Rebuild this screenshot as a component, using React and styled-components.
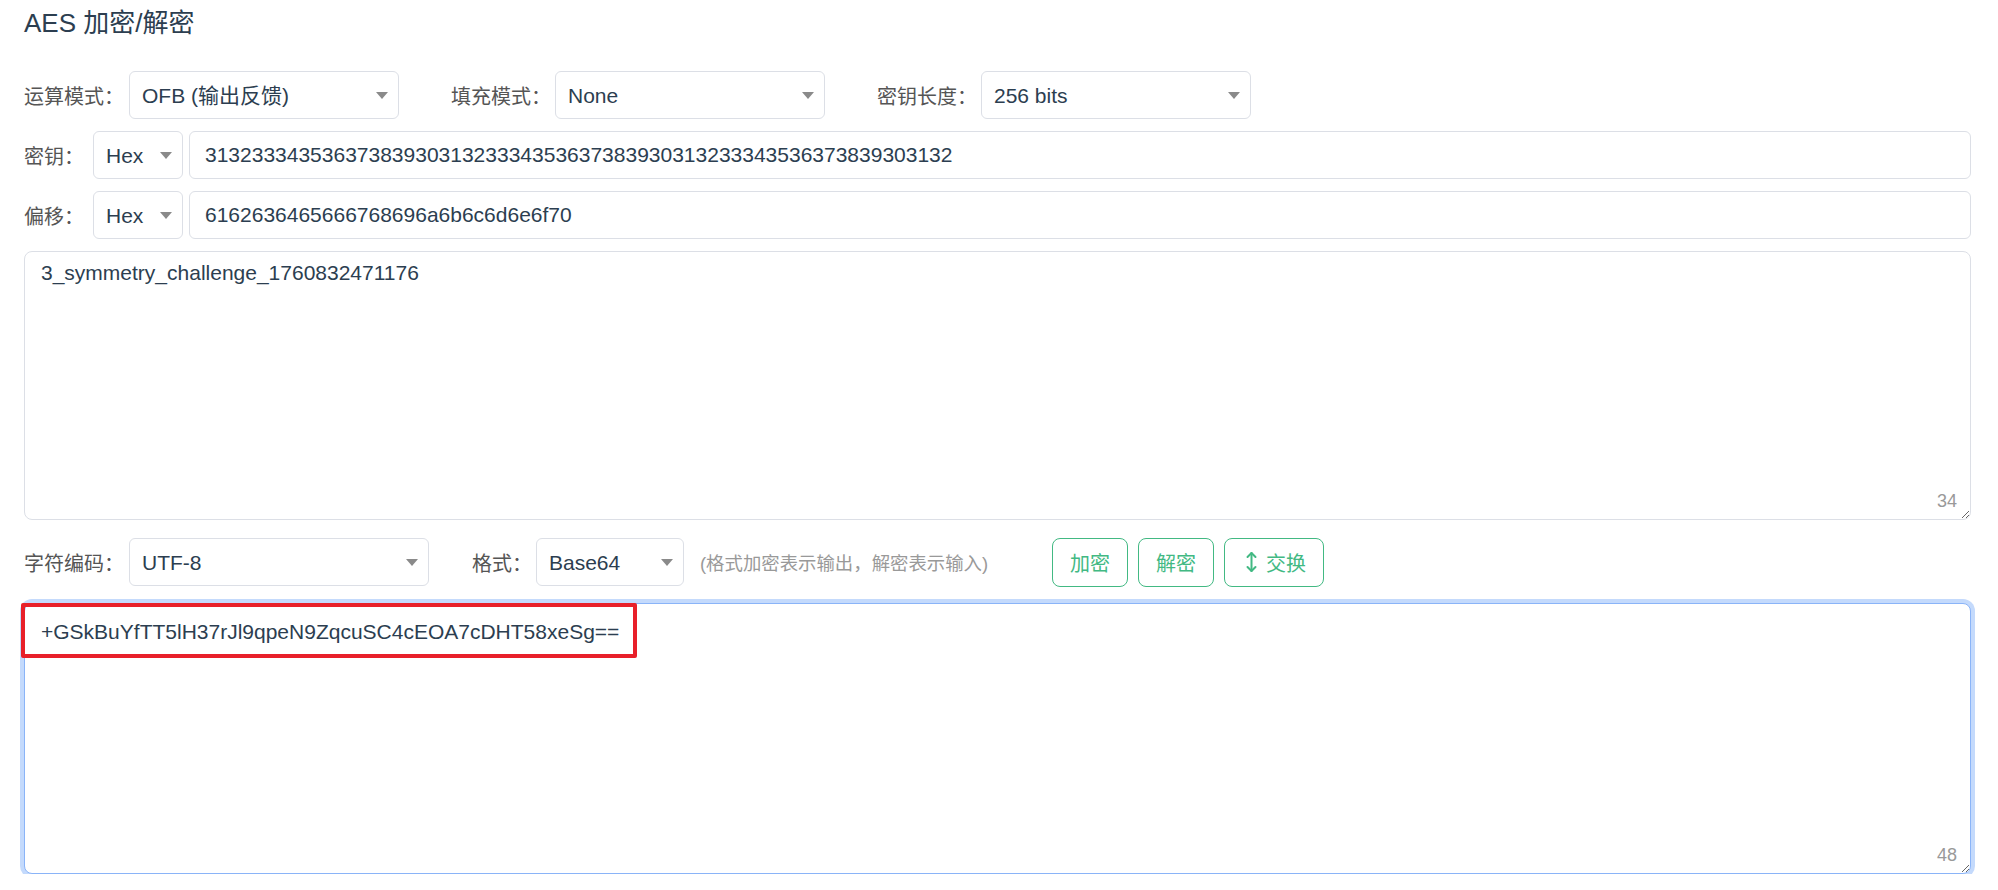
import React from "react";
import styled, { createGlobalStyle } from "styled-components";

const GlobalStyle = createGlobalStyle`
  html, body { margin: 0; padding: 0; background: #ffffff; }
  body {
    font-family: "Liberation Sans", Arial, "Noto Sans CJK SC", sans-serif;
    color: #2c3e50;
  }
  * { box-sizing: border-box; }
`;

const Page = styled.div`
  padding: 6px 27px 0 24px;
`;

const Title = styled.h2`
  margin: 0 0 30px 0;
  font-size: 26px;
  line-height: 35px;
  font-weight: 400;
  color: #2c3e50;
`;

const Row = styled.div`
  display: flex;
  align-items: center;
  height: 48px;
  gap: ${(p) => p.$gap || 0}px;
  margin-top: ${(p) => p.$top || 0}px;
`;

const Field = styled.div`
  display: flex;
  align-items: center;
  flex: ${(p) => (p.$grow ? 1 : "none")};
  margin-left: ${(p) => p.$ml || 0}px;
`;

const Label = styled.span`
  display: inline-block;
  width: ${(p) => p.$w}px;
  flex: none;
  font-size: 20px;
  color: #555;
  white-space: nowrap;
`;

const SelectWrap = styled.div`
  position: relative;
  width: ${(p) => p.$w}px;
  height: 48px;
  flex: none;
  margin-right: ${(p) => p.$mr || 0}px;
`;

const Select = styled.select`
  appearance: none;
  -webkit-appearance: none;
  width: 100%;
  height: 100%;
  border: 1px solid #dcdfe6;
  border-radius: 6px;
  background: #fff;
  padding: 0 30px 0 12px;
  font-family: "Liberation Sans", Arial, "Noto Sans CJK SC", sans-serif;
  font-size: 21px;
  color: #2c3e50;
  outline: none;
`;

const Caret = styled.span`
  position: absolute;
  right: 11px;
  top: 50%;
  margin-top: -3px;
  width: 0;
  height: 0;
  border-left: 6px solid transparent;
  border-right: 6px solid transparent;
  border-top: 7px solid #8a8a8a;
  pointer-events: none;
`;

const TextInput = styled.input`
  flex: 1;
  min-width: 0;
  height: 48px;
  border: 1px solid #dcdfe6;
  border-radius: 6px;
  padding: 0 15px;
  font-family: "Liberation Sans", Arial, "Noto Sans CJK SC", sans-serif;
  font-size: 21px;
  color: #2c3e50;
  outline: none;
`;

const AreaWrap = styled.div`
  position: relative;
  margin-top: ${(p) => p.$top || 0}px;
`;

const Area = styled.textarea`
  display: block;
  width: 100%;
  height: ${(p) => p.$h}px;
  resize: vertical;
  border: 1px solid ${(p) => (p.$focus ? "#8ab4f8" : "#dcdfe6")};
  box-shadow: ${(p) => (p.$focus ? "0 0 0 4px #c4dafc" : "none")};
  border-radius: 8px;
  padding: ${(p) => p.$pad};
  font-family: "Liberation Sans", Arial, "Noto Sans CJK SC", sans-serif;
  font-size: 21px;
  line-height: 30px;
  color: #2c3e50;
  outline: none;
`;

const Counter = styled.span`
  position: absolute;
  right: 14px;
  bottom: 8px;
  font-size: 18px;
  color: #999;
  pointer-events: none;
`;

const Highlight = styled.div`
  position: absolute;
  left: -3px;
  top: 0;
  width: 616px;
  height: 55px;
  border: 4px solid #e8202a;
  border-radius: 2px;
  pointer-events: none;
`;

const Hint = styled.span`
  font-size: 18.4px;
  color: #999;
  margin-left: 16px;
  white-space: nowrap;
`;

const Buttons = styled.div`
  display: flex;
  gap: 10px;
  margin-left: 64px;
`;

const Button = styled.button`
  display: inline-flex;
  align-items: center;
  justify-content: center;
  gap: 9px;
  height: 49px;
  padding: 0 ${(p) => p.$pr || 17}px 0 ${(p) => p.$pl || 17}px;
  background: #fff;
  border: 1px solid #42b983;
  border-radius: 8px;
  color: #42b983;
  font-family: "Liberation Sans", Arial, "Noto Sans CJK SC", sans-serif;
  font-size: 20px;
  cursor: pointer;
`;

const SwapIcon = () => (
  <svg width="11" height="22" viewBox="0 0 11 22" fill="none" stroke="#42b983" strokeWidth="2" strokeLinecap="round" strokeLinejoin="round">
    <path d="M5.5 2v18" />
    <path d="M1.5 6l4-4 4 4" />
    <path d="M1.5 16l4 4 4-4" />
  </svg>
);

const Dropdown = ({ w, mr, value, options }) => (
  <SelectWrap $w={w} $mr={mr}>
    <Select defaultValue={value}>
      {options.map((o) => (
        <option key={o} value={o}>
          {o}
        </option>
      ))}
    </Select>
    <Caret />
  </SelectWrap>
);

export default function App() {
  return (
    <>
      <GlobalStyle />
      <Page>
        <Title>AES 加密/解密</Title>
        <Row $gap={52}>
          <Field>
            <Label $w={105}>运算模式：</Label>
            <Dropdown w={270} value="OFB (输出反馈)" options={["CBC (密码分组链接)", "ECB (电子密码本)", "CFB (密文反馈)", "OFB (输出反馈)", "CTR (计数器)"]} />
          </Field>
          <Field>
            <Label $w={104}>填充模式：</Label>
            <Dropdown w={270} value="None" options={["Pkcs7", "ZeroPadding", "Iso10126", "AnsiX923", "None"]} />
          </Field>
          <Field>
            <Label $w={104}>密钥长度：</Label>
            <Dropdown w={270} value="256 bits" options={["128 bits", "192 bits", "256 bits"]} />
          </Field>
        </Row>
        <Row $top={12}>
          <Field $grow>
            <Label $w={69}>密钥：</Label>
            <Dropdown w={90} mr={6} value="Hex" options={["Text", "Hex", "Base64"]} />
            <TextInput defaultValue="3132333435363738393031323334353637383930313233343536373839303132" />
          </Field>
        </Row>
        <Row $top={12}>
          <Field $grow>
            <Label $w={69}>偏移：</Label>
            <Dropdown w={90} mr={6} value="Hex" options={["Text", "Hex", "Base64"]} />
            <TextInput defaultValue="6162636465666768696a6b6c6d6e6f70" />
          </Field>
        </Row>
        <AreaWrap $top={12}>
          <Area $h={269} $pad="6px 16px" defaultValue="3_symmetry_challenge_1760832471176" />
          <Counter>34</Counter>
        </AreaWrap>
        <Row $top={18}>
          <Field>
            <Label $w={105}>字符编码：</Label>
            <Dropdown w={300} value="UTF-8" options={["UTF-8", "GBK", "UTF-16"]} />
          </Field>
          <Field $ml={43}>
            <Label $w={64}>格式：</Label>
            <Dropdown w={148} value="Base64" options={["Base64", "Hex"]} />
          </Field>
          <Hint>(格式加密表示输出，解密表示输入)</Hint>
          <Buttons>
            <Button>加密</Button>
            <Button>解密</Button>
            <Button $pl={21} $pr={17}>
              <SwapIcon />
              交换
            </Button>
          </Buttons>
        </Row>
        <AreaWrap $top={17}>
          <Area $h={271} $pad="13px 16px" $focus defaultValue="+GSkBuYfTT5lH37rJl9qpeN9ZqcuSC4cEOA7cDHT58xeSg==" />
          <Counter>48</Counter>
          <Highlight />
        </AreaWrap>
      </Page>
    </>
  );
}
